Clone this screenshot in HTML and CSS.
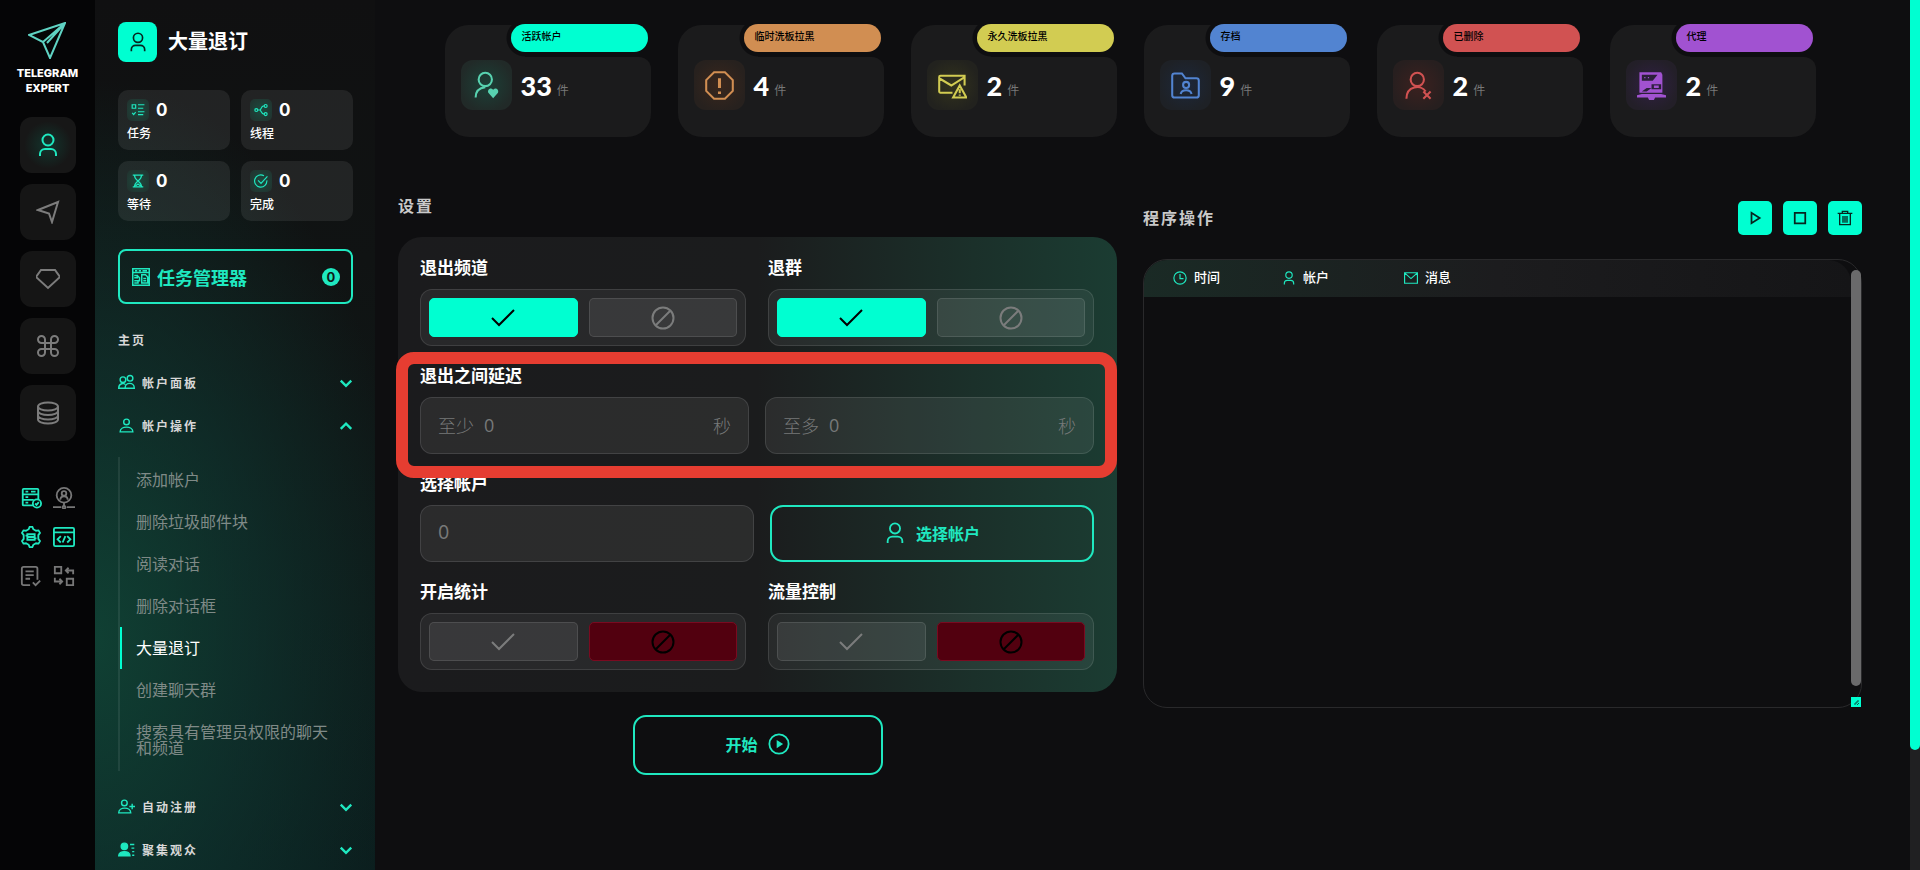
FILE: index.html
```html
<!DOCTYPE html>
<html lang="zh-CN">
<head>
    <meta charset="UTF-8">
    <meta name="viewport" content="width=device-width, initial-scale=1.0">
    <title>Telegram Expert</title>
    <link rel="stylesheet" href="styles.css">
</head>
<body>
    <!-- icon sprite -->
    <svg class="sprite" aria-hidden="true">
        <symbol id="i-user" viewBox="0 0 24 24"><circle cx="12" cy="7" r="5.500"/><path d="M4 23v-2a5 5 0 0 1 5-5h6a5 5 0 0 1 5 5v2"/></symbol>
        <symbol id="i-plane" viewBox="0 0 24 24"><path d="M2 10 22 2l-6 20-3-8.500z"/></symbol>
        <symbol id="i-diamond" viewBox="1 0 24 24"><path d="M6 3h14l5 7-12 11L1 10z"/></symbol>
        <symbol id="i-command" viewBox="0 0 24 24"><path d="M9 9h6v6H9zM9 9V5.500A3.500 3.500 0 1 0 5.500 9zM15 9h3.500A3.500 3.500 0 1 0 15 5.500zM15 15v3.500a3.500 3.500 0 1 0 3.500-3.500zM9 15H5.500A3.500 3.500 0 1 0 9 18.500z"/></symbol>
        <symbol id="i-database" viewBox="0 0 24 24"><ellipse cx="12" cy="5.500" rx="10" ry="4"/><path d="M2 5.500v13c0 2.200 4.500 4 10 4s10-1.800 10-4v-13M2 10c0 2.200 4.500 4 10 4s10-1.800 10-4M2 14.500c0 2.200 4.500 4 10 4s10-1.800 10-4"/></symbol>
        <symbol id="i-server-ok" viewBox="0 0 24 24"><path d="M15 20H4a1 1 0 0 1-1-1V3a1 1 0 0 1 1-1h15a1 1 0 0 1 1 1v10M3 8h17M3 14h12M6 5h3M6 11h3M6 17h3M12 5h5"/><circle cx="18.500" cy="18" r="4.500"/><path d="m16.500 18 1.500 1.500 2.500-3"/></symbol>
        <symbol id="i-user-net" viewBox="0 0 24 24"><circle cx="12" cy="9" r="8"/><circle cx="12" cy="7" r="2.500"/><path d="M8 14c0-5 8-5 8 0M12 17v4M0 22h9M15 22h9"/><circle cx="12" cy="22" r="1.500"/></symbol>
        <symbol id="i-gear" viewBox="0 0 24 24"><path d="M9.500 3.500 10.500 1h3l1 2.500 3 1.700 2.700-.4 1.600 2.700L20 10v4l1.800 2.500-1.600 2.700-2.700-.4-3 1.700-1 2.500h-3l-1-2.500-3-1.700-2.700.4-1.600-2.700L4 14v-4L2.200 7.500l1.600-2.700 2.700.4z"/><path d="M8 9h8v3H8zM8 12h8v3H8zM6 10.500h2M16 13.500h2"/></symbol>
        <symbol id="i-code" viewBox="0 0 24 24"><rect x="1" y="2" width="22" height="20" rx="1.500"/><path d="M1 7h22M8.500 11 5 14.500 8.500 18M15.500 11l3.500 3.500-3.500 3.500M13.500 11l-3 7"/></symbol>
        <symbol id="i-list-ok" viewBox="0 0 24 24"><path d="M11 22H4a2 2 0 0 1-2-2V4a2 2 0 0 1 2-2h13a2 2 0 0 1 2 2v12M6 7h9M6 11h9M6 15h5M14 19l3 3 5-5"/></symbol>
        <symbol id="i-swap" viewBox="0 0 24 24"><path d="M2 2h7v7H2zM15 15h7v7h-7zM22 10V6h-8M17 3l-3 3 3 3M2 14v4h8M7 15l3 3-3 3"/></symbol>
        <symbol id="i-tasks" viewBox="0 0 24 24"><path d="M2 3h6v6H2zM12 3h11M12 9h9M12 15h11M12 20h9M2 17l2.500 3L8 15.500"/></symbol>
        <symbol id="i-branch" viewBox="0 0 24 24"><circle cx="4" cy="12" r="2.500"/><circle cx="20" cy="5" r="2.500"/><circle cx="20" cy="19" r="2.500"/><path d="M7 12h3c2 0 2-7 7-7M10 12c2 0 2 7 7 7"/></symbol>
        <symbol id="i-hourglass" viewBox="0 0 24 24"><path d="M3 2h18M3 22h18M6 2c0 5 2 7 6 10-4 3-6 5-6 10M18 2c0 5-2 7-6 10 4 3 6 5 6 10M8 20l4-3 4 3"/></symbol>
        <symbol id="i-done" viewBox="0 0 24 24"><path d="M22 11a10.500 10.500 0 1 1-5-8M7 11l5 5L23 4"/></symbol>
        <symbol id="i-manager" viewBox="0 0 24 24"><path d="M1 1h22v22H1zM1 6h22M4 3.500h3M9 3.500h3M14 3.500h6M3 10h4v3H3M3 17h5v3H3M7 10l3 3v5M13 9h5l3 3v8h-8zM15 14h4M15 17h4"/></symbol>
        <symbol id="i-users" viewBox="0 0 24 24"><circle cx="7" cy="8" r="4"/><circle cx="17" cy="6" r="4"/><path d="M10 20H1c0-7 8-8 9-5M10 20c0-9 13-9 13 0z"/></symbol>
        <symbol id="i-person" viewBox="0 0 24 24"><circle cx="12" cy="7" r="4"/><path d="M3 21c0-9 18-9 18 0z"/></symbol>
        <symbol id="i-person-add" viewBox="0 0 24 24"><circle cx="9" cy="7" r="4"/><path d="M1 21c0-9 17-9 17 0zM20 8v8M16 12h8"/></symbol>
        <symbol id="i-person-list" viewBox="0 0 24 24"><path fill="currentColor" d="M9 3a4 4 0 1 1 0 9 4 4 0 0 1 0-9zM1 21c0-8 16-8 16 0z"/><path d="M17 5h6M19 10h4M20 15h3M20 20h3"/></symbol>
        <symbol id="i-down" viewBox="0 0 24 24"><path d="m3 8 9 9 9-9"/></symbol>
        <symbol id="i-up" viewBox="0 0 24 24"><path d="m3 17 9-9 9 9"/></symbol>
        <symbol id="i-user-heart" viewBox="0 0 24 24"><circle cx="11" cy="7" r="5.500"/><path d="M3 22c0-5 3-8 8-8.500"/><path fill="currentColor" stroke="none" d="M17.500 22.500 13.500 18c-1-2 1.500-5 4-2.500 2.500-2.500 5 .5 4 2.500z"/></symbol>
        <symbol id="i-alert" viewBox="0 0 24 24"><path d="M7.500 1h9L23 7.500v9L16.500 23h-9L1 16.500v-9z"/><path stroke-width="2.500" d="M12 6v8M12 17v2"/></symbol>
        <symbol id="i-mail-alert" viewBox="0 0 24 24"><path d="M12 18H2a1 1 0 0 1-1-1V5a1 1 0 0 1 1-1h20v8M1 6l10 6 11-7M18 12l5.500 10h-11zM18 15v3.500M18 19.500v1"/></symbol>
        <symbol id="i-folder-user" viewBox="0 0 24 24"><path d="M1 4a2 2 0 0 1 2-2h6l3 4h9a2 2 0 0 1 2 2v12a2 2 0 0 1-2 2H3a2 2 0 0 1-2-2z"/><circle cx="12.500" cy="11.500" r="2.500"/><path d="M8 19c1-4 8-4 9 0"/></symbol>
        <symbol id="i-user-x" viewBox="0 0 24 24"><circle cx="11" cy="7" r="5.500"/><path d="M2 23c0-11 12-12 16-6M16 17l6 6M22 17l-6 6"/></symbol>
        <symbol id="i-proxy" viewBox="0 0 24 24"><path fill="currentColor" fill-rule="evenodd" stroke="none" d="M2 1h18l1 2v15H2zM4 3v5h9l4-5zM6 5h1v1H6zM9 5h1v1H9zM12 11h8v4h-8zM14 12v2h4v-2zM4 17l4-3h4l-4 3zM0 20l4-1h16l4 1v2H15l-1 2h-4l-1-2H0z"/></symbol>
        <symbol id="i-check" viewBox="0 0 24 24"><path d="m1 12 7 7L23 4"/></symbol>
        <symbol id="i-ban" viewBox="0 0 24 24"><circle cx="12" cy="12" r="10.500"/><path d="M5 19 19 5"/></symbol>
        <symbol id="i-play" viewBox="0 0 24 24"><path d="M6 3v18l14-9z"/></symbol>
        <symbol id="i-play-circle" viewBox="0 0 24 24"><circle cx="12" cy="12" r="10.500"/><path fill="currentColor" stroke="none" d="M9.500 7.500v9l7-4.500z"/></symbol>
        <symbol id="i-stop" viewBox="0 0 24 24"><path d="M3 3h18v18H3z"/></symbol>
        <symbol id="i-trash" viewBox="0 0 24 24"><path d="M1 5h22M8 5V2h8v3M4 6v16h16V6M9 9v10M12 9v10M15 9v10"/></symbol>
        <symbol id="i-clock" viewBox="0 0 24 24"><circle cx="12" cy="12" r="10.500"/><path d="M12 5v8h6"/></symbol>
        <symbol id="i-mail" viewBox="0 0 24 24"><path d="M1 3h22v18H1zM2 4l10 9L22 4"/></symbol>
    </svg>

    <nav class="rail">
        <a class="logo" href="#">
            <svg viewBox="0 0 38 37"><path d="M1 13 37 1 22 36 15 20zM15 20 37 1 19 21"/></svg>
            <span>TELEGRAM<br>EXPERT</span>
        </a>
        <div class="rail-main">
            <button class="rail-btn active" aria-label="帐户"><svg class="icon"><use href="#i-user"/></svg></button>
            <button class="rail-btn" aria-label="发送"><svg class="icon"><use href="#i-plane"/></svg></button>
            <button class="rail-btn" aria-label="高级"><svg class="icon"><use href="#i-diamond"/></svg></button>
            <button class="rail-btn" aria-label="命令"><svg class="icon"><use href="#i-command"/></svg></button>
            <button class="rail-btn" aria-label="数据"><svg class="icon"><use href="#i-database"/></svg></button>
        </div>
        <div class="rail-tools">
            <button class="tool on" aria-label="服务器"><svg class="icon"><use href="#i-server-ok"/></svg></button>
            <button class="tool" aria-label="网络"><svg class="icon"><use href="#i-user-net"/></svg></button>
            <button class="tool on" aria-label="配置"><svg class="icon"><use href="#i-gear"/></svg></button>
            <button class="tool on" aria-label="代码"><svg class="icon"><use href="#i-code"/></svg></button>
            <button class="tool" aria-label="清单"><svg class="icon"><use href="#i-list-ok"/></svg></button>
            <button class="tool" aria-label="转换"><svg class="icon"><use href="#i-swap"/></svg></button>
        </div>
    </nav>

    <aside class="sidebar">
        <header class="side-title">
            <span class="side-icon"><svg class="icon"><use href="#i-user"/></svg></span>
            <h1>大量退订</h1>
        </header>

        <div class="counters">
            <div class="counter"><div class="counter-top"><span class="counter-icon"><svg class="icon"><use href="#i-tasks"/></svg></span><b>0</b></div><p>任务</p></div>
            <div class="counter"><div class="counter-top"><span class="counter-icon"><svg class="icon"><use href="#i-branch"/></svg></span><b>0</b></div><p>线程</p></div>
            <div class="counter"><div class="counter-top"><span class="counter-icon"><svg class="icon"><use href="#i-hourglass"/></svg></span><b>0</b></div><p>等待</p></div>
            <div class="counter"><div class="counter-top"><span class="counter-icon"><svg class="icon"><use href="#i-done"/></svg></span><b>0</b></div><p>完成</p></div>
        </div>

        <button class="manager"><svg class="icon"><use href="#i-manager"/></svg>任务管理器<span class="badge">0</span></button>

        <h2 class="menu-title">主页</h2>
        <button class="menu-row"><svg class="icon"><use href="#i-users"/></svg>帐户面板<svg class="icon arrow"><use href="#i-down"/></svg></button>
        <button class="menu-row"><svg class="icon"><use href="#i-person"/></svg>帐户操作<svg class="icon arrow"><use href="#i-up"/></svg></button>
        <ul class="submenu">
            <li><a href="#">添加帐户</a></li>
            <li><a href="#">删除垃圾邮件块</a></li>
            <li><a href="#">阅读对话</a></li>
            <li><a href="#">删除对话框</a></li>
            <li><a href="#" class="current">大量退订</a></li>
            <li><a href="#">创建聊天群</a></li>
            <li><a href="#">搜索具有管理员权限的聊天和频道</a></li>
        </ul>
        <button class="menu-row"><svg class="icon"><use href="#i-person-add"/></svg>自动注册<svg class="icon arrow"><use href="#i-down"/></svg></button>
        <button class="menu-row"><svg class="icon"><use href="#i-person-list"/></svg>聚集观众<svg class="icon arrow"><use href="#i-down"/></svg></button>
    </aside>

    <main class="content">
        <section class="stats">
            <article class="stat teal">
                <h3>活跃帐户</h3>
                <div class="stat-body"><span class="stat-icon"><svg class="icon"><use href="#i-user-heart"/></svg></span><b>33</b><small>件</small></div>
            </article>
            <article class="stat orange">
                <h3>临时洗板拉黑</h3>
                <div class="stat-body"><span class="stat-icon"><svg class="icon"><use href="#i-alert"/></svg></span><b>4</b><small>件</small></div>
            </article>
            <article class="stat yellow">
                <h3>永久洗板拉黑</h3>
                <div class="stat-body"><span class="stat-icon"><svg class="icon"><use href="#i-mail-alert"/></svg></span><b>2</b><small>件</small></div>
            </article>
            <article class="stat blue">
                <h3>存档</h3>
                <div class="stat-body"><span class="stat-icon"><svg class="icon"><use href="#i-folder-user"/></svg></span><b>9</b><small>件</small></div>
            </article>
            <article class="stat red">
                <h3>已删除</h3>
                <div class="stat-body"><span class="stat-icon"><svg class="icon"><use href="#i-user-x"/></svg></span><b>2</b><small>件</small></div>
            </article>
            <article class="stat purple">
                <h3>代理</h3>
                <div class="stat-body"><span class="stat-icon"><svg class="icon"><use href="#i-proxy"/></svg></span><b>2</b><small>件</small></div>
            </article>
        </section>

        <div class="columns">
            <section class="settings">
                <h2 class="section-title">设置</h2>
                <form class="panel">
                    <div class="row">
                        <div class="field">
                            <h4>退出频道</h4>
                            <div class="toggle">
                                <button type="button" class="yes" aria-label="是" aria-pressed="true"><svg class="icon"><use href="#i-check"/></svg></button>
                                <button type="button" aria-label="否" aria-pressed="false"><svg class="icon"><use href="#i-ban"/></svg></button>
                            </div>
                        </div>
                        <div class="field">
                            <h4>退群</h4>
                            <div class="toggle">
                                <button type="button" class="yes" aria-label="是" aria-pressed="true"><svg class="icon"><use href="#i-check"/></svg></button>
                                <button type="button" aria-label="否" aria-pressed="false"><svg class="icon"><use href="#i-ban"/></svg></button>
                            </div>
                        </div>
                    </div>

                    <div class="delay">
                        <h4>退出之间延迟</h4>
                        <div class="row">
                            <div class="input-box">
                                <label for="delay-min">至少</label>
                                <input type="text" id="delay-min" value="0">
                                <span>秒</span>
                            </div>
                            <div class="input-box">
                                <label for="delay-max">至多</label>
                                <input type="text" id="delay-max" value="0">
                                <span>秒</span>
                            </div>
                        </div>
                    </div>

                    <div class="accounts">
                        <h4><label for="account-count">选择帐户</label></h4>
                        <div class="row">
                            <div class="input-box count"><input type="text" id="account-count" value="0"></div>
                            <button type="button" class="outline-btn"><svg class="icon"><use href="#i-user"/></svg>选择帐户</button>
                        </div>
                    </div>

                    <div class="row">
                        <div class="field">
                            <h4>开启统计</h4>
                            <div class="toggle">
                                <button type="button" aria-label="是" aria-pressed="false"><svg class="icon"><use href="#i-check"/></svg></button>
                                <button type="button" class="no" aria-label="否" aria-pressed="true"><svg class="icon"><use href="#i-ban"/></svg></button>
                            </div>
                        </div>
                        <div class="field">
                            <h4>流量控制</h4>
                            <div class="toggle">
                                <button type="button" aria-label="是" aria-pressed="false"><svg class="icon"><use href="#i-check"/></svg></button>
                                <button type="button" class="no" aria-label="否" aria-pressed="true"><svg class="icon"><use href="#i-ban"/></svg></button>
                            </div>
                        </div>
                    </div>
                </form>
                <button class="outline-btn start">开始<svg class="icon"><use href="#i-play-circle"/></svg></button>
            </section>

            <section class="log">
                <header class="log-head">
                    <h2 class="section-title">程序操作</h2>
                    <div class="log-actions">
                        <button aria-label="运行"><svg class="icon"><use href="#i-play"/></svg></button>
                        <button aria-label="停止"><svg class="icon"><use href="#i-stop"/></svg></button>
                        <button aria-label="清空"><svg class="icon"><use href="#i-trash"/></svg></button>
                    </div>
                </header>
                <div class="log-box">
                    <div class="log-table">
                        <table>
                            <thead>
                                <tr>
                                    <th class="time"><svg class="icon"><use href="#i-clock"/></svg>时间</th>
                                    <th class="account"><svg class="icon"><use href="#i-user"/></svg>帐户</th>
                                    <th><svg class="icon"><use href="#i-mail"/></svg>消息</th>
                                </tr>
                            </thead>
                            <tbody></tbody>
                        </table>
                    </div>
                    <div class="log-scroll">
                        <div class="log-thumb"></div>
                        <svg class="resizer" viewBox="0 0 10 10"><path d="M0 0h10v10H0z"/><path class="grip" d="M4 8V6h2V4h2M6 8l2-2"/></svg>
                    </div>
                </div>
            </section>
        </div>
    </main>

    <div class="page-scroll"><div class="page-thumb"></div></div>
</body>
</html>
```
FILE: styles.css
```css
:root {
    --accent: #00FFD1;
    --accent-soft: #1FE8C0;
    --bg: #0E0E10;
    --card: #1B1B1C;
    --muted: #777777;
    --line: rgba(255, 255, 255, 0.11);
}

* {
    margin: 0;
    padding: 0;
    box-sizing: border-box;
}

body {
    font-family: Inter, "Noto Sans CJK SC", sans-serif;
    background: var(--bg);
    color: #FFFFFF;
    height: 100vh;
    display: flex;
    overflow: hidden;
}

button, input {
    font: inherit;
    color: inherit;
    background: none;
    border: none;
}

button {
    cursor: pointer;
}

a {
    color: inherit;
    text-decoration: none;
}

.sprite {
    position: absolute;
    width: 0;
    height: 0;
}

.icon {
    width: 24px;
    height: 24px;
    flex: none;
    fill: none;
    stroke: currentColor;
    stroke-width: 2;
}

/* left rail */
.rail {
    flex: none;
    width: 95px;
    background: #050506;
    display: flex;
    flex-direction: column;
    align-items: center;
    padding-top: 22px;
}

.logo {
    display: flex;
    flex-direction: column;
    align-items: center;
    gap: 7px;
    height: 95px;
    font-family: Inter, sans-serif;
    font-size: 11px;
    font-weight: 800;
    line-height: 15px;
    text-align: center;
}

.logo svg {
    width: 38px;
    height: 37px;
    fill: none;
    stroke: #5FD3C3;
    stroke-width: 2;
}

.rail-main {
    display: flex;
    flex-direction: column;
    gap: 11px;
}

.rail-btn {
    width: 56px;
    height: 56px;
    border-radius: 12px;
    background: #151515;
    color: #7C7C7C;
    display: flex;
    align-items: center;
    justify-content: center;
}

.rail-btn.active {
    background: radial-gradient(circle, #12352D 0%, #171717 60%);
    color: var(--accent-soft);
}

.rail-tools {
    display: grid;
    grid-template-columns: 22px 22px;
    gap: 17px 11px;
    margin-top: 46px;
}

.tool {
    height: 22px;
    color: #777777;
}

.tool .icon {
    width: 22px;
    height: 22px;
}

.tool.on {
    color: var(--accent-soft);
}

/* sidebar */
.sidebar {
    flex: none;
    width: 280px;
    padding: 22px 22px 0 23px;
    overflow: hidden;
    background:
        radial-gradient(ellipse 320px 560px at 0 640px, rgba(16, 68, 54, 0.9), rgba(15, 56, 50, 0.6) 50%, transparent),
        linear-gradient(180deg, #101011 0%, #101313 30%, #0E1A19 70%, #0B1D1D 100%);
}

.side-title {
    display: flex;
    align-items: center;
    gap: 11px;
    height: 40px;
    margin-bottom: 28px;
}

.side-title h1 {
    font-size: 20px;
    line-height: 24px;
}

.side-icon {
    width: 39px;
    height: 40px;
    border-radius: 8px;
    background: var(--accent);
    color: #06251F;
    display: flex;
    align-items: center;
    justify-content: center;
}

.side-icon .icon {
    width: 20px;
    height: 20px;
}

.counters {
    display: grid;
    grid-template-columns: 1fr 1fr;
    gap: 11px;
    margin-bottom: 28px;
}

.counter {
    height: 60px;
    border-radius: 10px;
    padding: 9px;
    background: rgba(255, 255, 255, 0.08);
}

.counter-top {
    display: flex;
    align-items: center;
    gap: 7px;
    height: 22px;
}

.counter-top b {
    font-size: 17px;
}

.counter-icon {
    width: 22px;
    height: 22px;
    border-radius: 5px;
    background: radial-gradient(circle, #1C4A3E, #22302D);
    color: var(--accent-soft);
    display: flex;
    align-items: center;
    justify-content: center;
}

.counter-icon .icon {
    width: 14px;
    height: 14px;
}

.counter p {
    margin-top: 5px;
    font-size: 12px;
    font-weight: 500;
    line-height: 16px;
}

.manager {
    width: 100%;
    height: 55px;
    border: 2px solid var(--accent-soft);
    border-radius: 8px;
    padding: 0 11px 0 12px;
    display: flex;
    align-items: center;
    gap: 7px;
    color: var(--accent-soft);
    font-size: 18px;
    font-weight: 700;
    margin-bottom: 27px;
}

.manager .icon {
    width: 18px;
    height: 18px;
}

.badge {
    margin-left: auto;
    width: 18px;
    height: 18px;
    border-radius: 50%;
    background: var(--accent-soft);
    color: #0E1B18;
    font-size: 13px;
    line-height: 18px;
    text-align: center;
}

.menu-title {
    font-size: 12px;
    letter-spacing: 2px;
    line-height: 20px;
    color: #D8D8D8;
    margin-bottom: 10px;
}

.menu-row {
    width: 100%;
    height: 43px;
    display: flex;
    align-items: center;
    gap: 7px;
    font-size: 12px;
    font-weight: 700;
    letter-spacing: 2px;
    color: #D8D8D8;
}

.menu-row .icon {
    width: 17px;
    height: 17px;
    color: var(--accent-soft);
}

.menu-row .arrow {
    width: 14px;
    height: 14px;
    margin-left: auto;
    stroke-width: 4;
}

.submenu {
    list-style: none;
    margin: 10px 0 14px;
    padding: 2px 0;
    border-left: 2px solid rgba(255, 255, 255, 0.08);
}

.submenu a {
    display: block;
    padding: 13px 16px 13px 14px;
    border-left: 2px solid transparent;
    font-size: 16px;
    font-weight: 400;
    line-height: 16px;
    color: #7F8A87;
}

.submenu .current {
    border-color: var(--accent);
    color: #FFFFFF;
}

/* main area */
.content {
    flex: 1;
    min-width: 0;
    padding: 25px 48px 0 23px;
}

.stats {
    display: flex;
    justify-content: center;
    gap: 27px;
}

.stat {
    flex: 0 1 206px;
    height: 112px;
    position: relative;
    padding: 35px 16px 0;
}

/* tab next to the pill, carved along its edge */
.stat::before {
    content: "";
    position: absolute;
    left: 0;
    top: 0;
    width: 80px;
    height: 32px;
    border-top-left-radius: 24px;
    background: radial-gradient(circle at 100% 13px, transparent 18px, var(--card) 19px);
}

.stat::after {
    content: "";
    position: absolute;
    inset: 32px 0 0;
    border-radius: 0 12px 24px 24px;
    background: var(--card);
}

.stat h3 {
    position: absolute;
    top: -1px;
    right: 3px;
    width: 137px;
    height: 28px;
    padding-left: 11px;
    border-radius: 14px;
    background: var(--tone);
    color: #000000;
    font-size: 10px;
    font-weight: 500;
    line-height: 24px;
    z-index: 2;
}

.stat-body {
    position: relative;
    z-index: 1;
    display: flex;
    align-items: center;
}

.stat-icon {
    width: 51px;
    height: 50px;
    border-radius: 12px;
    margin-right: 9px;
    background: radial-gradient(circle, var(--glow), var(--glow-edge) 75%);
    color: var(--ink, var(--tone));
    display: flex;
    align-items: center;
    justify-content: center;
}

.stat-icon .icon {
    width: 29px;
    height: 29px;
    stroke-width: 1.700;
}

.stat b {
    font-family: Lato, sans-serif;
    font-size: 27px;
    font-weight: 900;
}

.stat small {
    font-size: 12px;
    font-weight: 400;
    color: var(--muted);
    margin: 8px 0 0 5px;
}

.teal { --tone: #00FFD1; --ink: #58D2B0; --glow: #1C4037; --glow-edge: #212A28; }
.orange { --tone: #D18E52; --glow: #3A271D; --glow-edge: #27211E; }
.yellow { --tone: #D2CC52; --glow: #33331D; --glow-edge: #22221E; }
.blue { --tone: #5284D1; --glow: #1D283A; --glow-edge: #1E2126; }
.red { --tone: #D15252; --glow: #3C211F; --glow-edge: #271F1F; }
.purple { --tone: #A152D1; --glow: #302043; --glow-edge: #231F28; }

.columns {
    display: grid;
    grid-template-columns: 1fr 1fr;
    gap: 26px;
    margin-top: 56px;
}

.section-title {
    font-size: 16px;
    font-weight: 700;
    letter-spacing: 2px;
    line-height: 26px;
    color: #C9C9C9;
}

.settings {
    display: flex;
    flex-direction: column;
}

.panel {
    margin: 18px 0 23px;
    padding: 19px 23px 22px 22px;
    border-radius: 24px;
    background: linear-gradient(90deg, #1B1B1D 0%, #1B1C1D 50%, #1B302A 80%, #1B3C32 100%);
    display: flex;
    flex-direction: column;
    gap: 18px;
}

.panel h4 {
    font-size: 17px;
    font-weight: 700;
    line-height: 24px;
    margin-bottom: 9px;
}

.row {
    display: flex;
    gap: 22px;
}

.field {
    flex: 1;
}

.toggle {
    display: flex;
    gap: 11px;
    height: 57px;
    padding: 8px;
    border: 1px solid var(--line);
    border-radius: 12px;
    background: rgba(255, 255, 255, 0.06);
}

.toggle button {
    flex: 1;
    border: 1px solid var(--line);
    border-radius: 5px;
    background: rgba(255, 255, 255, 0.08);
    color: #7B7C7C;
    display: flex;
    align-items: center;
    justify-content: center;
}

.toggle .yes {
    border-color: var(--accent);
    background: var(--accent);
    color: #000000;
}

.toggle .no {
    border-color: #7A0A20;
    background: #52000F;
    color: #000000;
}

/* highlighted frame around the delay inputs */
.delay {
    position: relative;
}

.delay::after {
    content: "";
    position: absolute;
    inset: -12px -23px -24px -24px;
    border: 12px solid #E63D31;
    border-radius: 18px;
    pointer-events: none;
    z-index: 1;
}

.delay .row,
.accounts .row {
    gap: 16px;
}

.input-box {
    flex: 1;
    min-width: 0;
    display: flex;
    align-items: center;
    height: 57px;
    padding: 0 17px 2px;
    border: 1px solid var(--line);
    border-radius: 12px;
    background: rgba(255, 255, 255, 0.07);
    color: #777979;
    font-family: "Open Sans", "Noto Sans CJK SC", sans-serif;
    font-size: 18px;
    font-weight: 300;
}

.input-box input {
    flex: 1;
    min-width: 0;
    margin-left: 10px;
    font-weight: 400;
    outline: none;
}

.input-box.count input {
    margin-left: 0;
    font-family: Inter, sans-serif;
}

.outline-btn {
    height: 57px;
    border: 2px solid var(--accent-soft);
    border-radius: 13px;
    padding-bottom: 2px;
    color: var(--accent-soft);
    font-size: 16px;
    font-weight: 700;
    display: flex;
    align-items: center;
    justify-content: center;
    gap: 10px;
}

.outline-btn .icon {
    width: 22px;
    height: 22px;
}

.accounts .outline-btn {
    flex: 0 0 324px;
}

.start {
    align-self: center;
    width: 250px;
    height: 60px;
}

/* log */
.log {
    padding-top: 8px;
}

.log-head {
    display: flex;
    align-items: center;
    justify-content: space-between;
    margin-bottom: 24px;
}

.log-actions {
    display: flex;
    gap: 11px;
}

.log-actions button {
    width: 34px;
    height: 34px;
    border-radius: 5px;
    background: var(--accent);
    color: #06251F;
    display: flex;
    align-items: center;
    justify-content: center;
}

.log-actions .icon {
    width: 14px;
    height: 14px;
    stroke-width: 3;
}

.log-actions button:last-child .icon {
    width: 16px;
    height: 16px;
    stroke-width: 2;
}

.log-box {
    display: flex;
    height: 449px;
    border: 1px solid #29292B;
    border-radius: 24px;
}

.log-table {
    flex: 1;
}

.log table {
    width: 100%;
    table-layout: fixed;
    border-collapse: collapse;
    border-radius: 23px 23px 0 0;
    overflow: hidden;
    background: linear-gradient(90deg, #1A2A25 0%, #1C1C1E 50%, #151517 100%);
}

.log th {
    height: 37px;
    padding-bottom: 4px;
    text-align: left;
    font-size: 13px;
    font-weight: 500;
}

.log th .icon {
    width: 14px;
    height: 14px;
    margin-right: 7px;
    vertical-align: -3px;
    color: var(--accent-soft);
}

.log .time {
    width: 138px;
    padding-left: 29px;
}

.log .account {
    width: 122px;
}

.log-scroll {
    width: 10px;
    padding-top: 10px;
    display: flex;
    flex-direction: column;
    justify-content: space-between;
}

.log-thumb {
    height: 416px;
    border-radius: 5px;
    background: #6A6A6B;
}

.resizer {
    width: 10px;
    height: 10px;
    fill: var(--accent);
}

.resizer .grip {
    fill: none;
    stroke: #0B5547;
}

.page-scroll {
    flex: none;
    width: 10px;
    background: #202022;
}

.page-thumb {
    height: 750px;
    border-radius: 0 0 5px 5px;
    background: var(--accent);
}
```
